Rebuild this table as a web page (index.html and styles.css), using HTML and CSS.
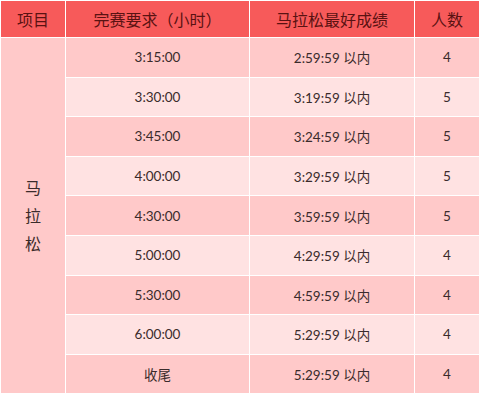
FILE: index.html
```html
<!DOCTYPE html>
<html lang="zh">
<head>
<meta charset="utf-8">
<link rel="stylesheet" href="styles.css">
</head>
<body>
<table class="grid">
  <thead>
    <tr>
      <th class="c1">项目</th>
      <th class="c2">完赛要求（小时）</th>
      <th class="c3">马拉松最好成绩</th>
      <th class="c4">人数</th>
    </tr>
  </thead>
  <tbody>
    <tr class="odd"><td class="event" rowspan="9"><span class="vert">马<br>拉<br>松</span></td><td>3:15:00</td><td>2:59:59 以内</td><td>4</td></tr>
    <tr class="even"><td>3:30:00</td><td>3:19:59 以内</td><td>5</td></tr>
    <tr class="odd"><td>3:45:00</td><td>3:24:59 以内</td><td>5</td></tr>
    <tr class="even"><td>4:00:00</td><td>3:29:59 以内</td><td>5</td></tr>
    <tr class="odd"><td>4:30:00</td><td>3:59:59 以内</td><td>5</td></tr>
    <tr class="even"><td>5:00:00</td><td>4:29:59 以内</td><td>4</td></tr>
    <tr class="odd"><td>5:30:00</td><td>4:59:59 以内</td><td>4</td></tr>
    <tr class="even"><td>6:00:00</td><td>5:29:59 以内</td><td>4</td></tr>
    <tr class="odd"><td>收尾</td><td>5:29:59 以内</td><td>4</td></tr>
  </tbody>
</table>
</body>
</html>
```
FILE: styles.css
```css
html, body {
  margin: 0;
  padding: 0;
  background: #ffffff;
}
.grid {
  margin: 1px 0 0 1px;
  width: 477px;
  border-collapse: collapse;
  table-layout: fixed;
  font-family: Lato, "Noto Sans CJK SC", sans-serif;
  color: #3a2b2b;
}
.grid th, .grid td {
  border: 1.5px solid #ffffff;
  padding: 0;
  text-align: center;
  vertical-align: middle;
}
.grid tr > :first-child { border-left: none; }
.grid tr > :last-child { border-right: none; }
.grid thead th { border-top: none; }
.grid tbody tr:last-child td { border-bottom: none; }
.grid th {
  background: #f75a5a;
  color: #5a1212;
  font-family: "Noto Sans CJK SC", sans-serif;
  font-weight: 400;
  font-size: 16px;
  height: 36px;
}
.c1 { width: 64px; }
.c2 { width: 183px; }
.c3 { width: 164px; }
.c4 { width: 64px; }
.grid td {
  font-size: 13.5px;
  height: 38.6px;
}
.grid tr.odd td { background: #ffc9c9; }
.grid tr.even td { background: #ffe2e2; }
.grid td.event {
  background: #ffc9c9;
  font-family: "Noto Sans CJK SC", sans-serif;
  font-size: 16px;
  line-height: 28px;
  color: #3a2b2b;
}
.vert { display: inline-block; }
```
